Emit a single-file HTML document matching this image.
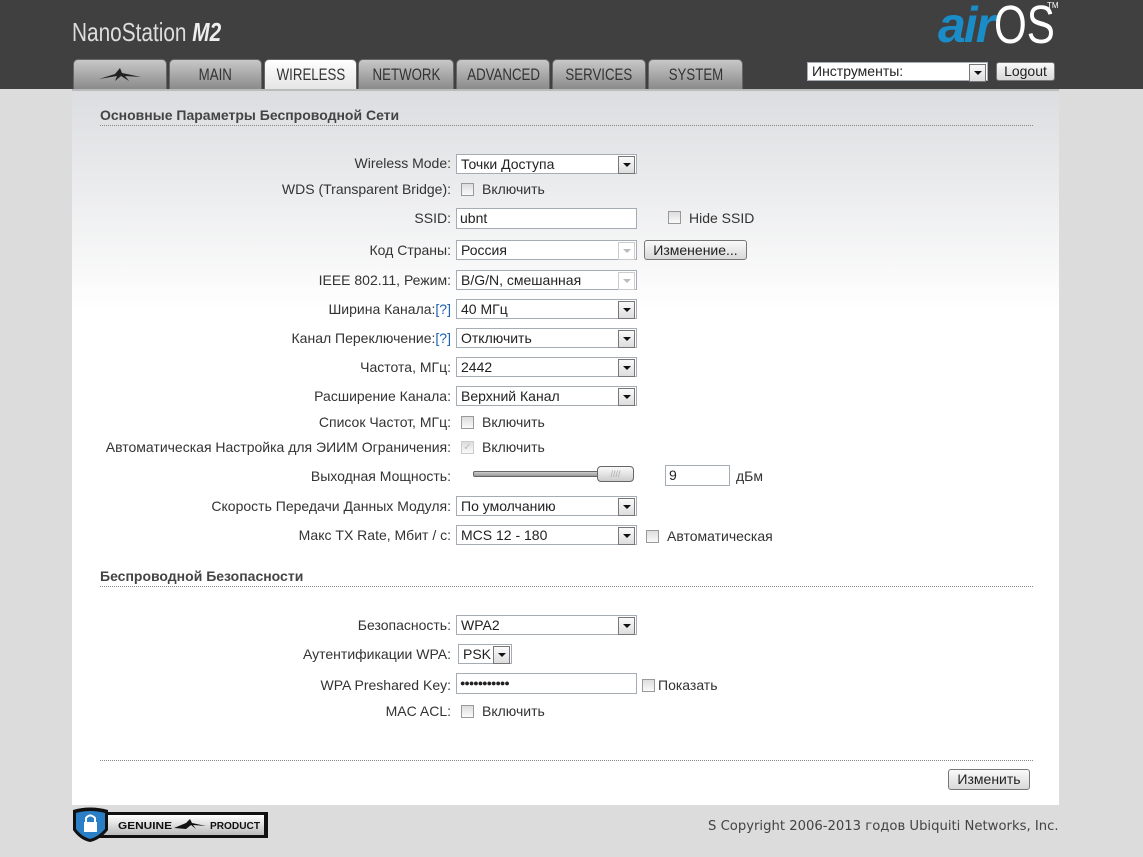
<!DOCTYPE html>
<html><head><meta charset="utf-8">
<style>
*{margin:0;padding:0;box-sizing:border-box}
body{width:1143px;height:857px;background:#dcdcdc;font-family:"Liberation Sans",Arial,sans-serif;font-size:14px;color:#333;position:relative;overflow:hidden}
.hdr{position:absolute;left:0;top:0;width:1143px;height:89px;background:#404040}
.a{position:absolute;white-space:nowrap}
.tab{position:absolute;top:59px;height:30px;border-radius:5px 5px 0 0;background:linear-gradient(#c8c8c8,#8a8a8a);border:1px solid #666;border-bottom:none;text-align:center;font-size:17px;line-height:30px;color:#333}
.tab span{display:inline-block;transform:scaleX(0.78)}
.tab.on{background:linear-gradient(#fff,#e4e4e4);height:31px}
.panel{position:absolute;left:72px;top:89px;width:987px;height:716px;background:linear-gradient(#dcdde0 0,#fff 220px);border-top:2px solid #bbb}
.lbl{position:absolute;right:692px;white-space:nowrap;color:#333}
.sel{position:absolute;height:20px;border:1px solid #a5acb5;background:#fff;padding-left:4px;line-height:18px;color:#222}
.sel:after{content:"";position:absolute;right:1px;top:1px;width:15px;height:16px;background:linear-gradient(#fafafa,#ddd);border:1px solid #777}
.sel:before{content:"";position:absolute;right:5px;top:8px;border:4px solid transparent;border-top:4px solid #111;z-index:2}
.sel.dis:after{border-color:#ccc;background:#fff}
.sel.dis:before{border-top-color:#bbb}
.inp{position:absolute;height:21px;border:1px solid #a5acb5;background:#fff;padding-left:3px;line-height:19px;color:#222}
.cb{position:absolute;width:13px;height:13px;border:1px solid #999;background:linear-gradient(#ddd,#fafafa)}
.btn{position:absolute;border:1px solid #777;border-radius:3px;background:linear-gradient(#fafafa,#d8d8d8);text-align:center;color:#222}
.h{position:absolute;left:100px;width:933px;font-weight:bold;color:#444;border-bottom:1px dotted #888;padding-bottom:2px}
.q{color:#1a5fb0}
</style></head><body>
<div class="hdr"></div>
<div class="a" style="left:72px;top:17px;font-size:26px;color:#ddd;transform:scaleX(0.8);transform-origin:left">NanoStation <i style="font-weight:bold;color:#eee">M2</i></div>
<div class="a" style="left:938px;top:-4px;font-size:50px;font-style:italic;color:#1a8cc8;font-weight:bold;letter-spacing:-2px">air</div>
<div class="a" style="left:994px;top:-6px;font-size:54px;color:#fff;transform:scaleX(0.78);transform-origin:left">OS</div>
<div class="a" style="left:1047px;top:1px;font-size:8px;color:#fff">TM</div>
<div class="sel" style="left:807px;top:62px;width:181px;height:19px;font-size:14px;line-height:17px">Инструменты:</div>
<div class="btn" style="left:996px;top:62px;width:59px;height:19px;line-height:17px">Logout</div>

<div class="tab" style="left:73px;width:94px"><svg width="50" height="20" viewBox="0 0 50 20" style="margin-top:5px"><path d="M4 14 L20 9 L25 3 L27 8 L46 12 L30 11 L34 16 L26 11 L20 16 L22 11Z" fill="#222"/></svg></div>
<div class="tab" style="left:169px;width:93px"><span>MAIN</span></div>
<div class="tab on" style="left:264px;width:93px"><span>WIRELESS</span></div>
<div class="tab" style="left:358px;width:96px"><span>NETWORK</span></div>
<div class="tab" style="left:456px;width:94px"><span>ADVANCED</span></div>
<div class="tab" style="left:552px;width:94px"><span>SERVICES</span></div>
<div class="tab" style="left:648px;width:95px"><span>SYSTEM</span></div>

<div class="panel"></div>
<div class="h" style="top:107px">Основные Параметры Беспроводной Сети</div>

<div class="lbl" style="top:155px">Wireless Mode:</div><div class="sel" style="left:456px;top:154px;width:181px">Точки Доступа</div>
<div class="lbl" style="top:181px">WDS (Transparent Bridge):</div><div class="cb" style="left:461px;top:183px"></div><div class="a" style="left:482px;top:181px">Включить</div>
<div class="lbl" style="top:210px">SSID:</div><div class="inp" style="left:456px;top:208px;width:181px">ubnt</div><div class="cb" style="left:668px;top:211px"></div><div class="a" style="left:689px;top:210px">Hide SSID</div>
<div class="lbl" style="top:242px">Код Страны:</div><div class="sel dis" style="left:456px;top:240px;width:181px">Россия</div><div class="btn" style="left:644px;top:240px;width:103px;height:20px;line-height:18px">Изменение...</div>
<div class="lbl" style="top:272px">IEEE 802.11, Режим:</div><div class="sel dis" style="left:456px;top:270px;width:181px">B/G/N, смешанная</div>
<div class="lbl" style="top:301px">Ширина Канала:<span class="q">[?]</span></div><div class="sel" style="left:456px;top:299px;width:181px">40 МГц</div>
<div class="lbl" style="top:330px">Канал Переключение:<span class="q">[?]</span></div><div class="sel" style="left:456px;top:328px;width:181px">Отключить</div>
<div class="lbl" style="top:359px">Частота, МГц:</div><div class="sel" style="left:456px;top:357px;width:181px">2442</div>
<div class="lbl" style="top:388px">Расширение Канала:</div><div class="sel" style="left:456px;top:386px;width:181px">Верхний Канал</div>
<div class="lbl" style="top:414px">Список Частот, МГц:</div><div class="cb" style="left:461px;top:416px"></div><div class="a" style="left:482px;top:414px">Включить</div>
<div class="lbl" style="top:439px">Автоматическая Настройка для ЭИИМ Ограничения:</div><div class="cb" style="left:461px;top:441px;border-color:#ccc;color:#bbb;font-size:10px;line-height:11px;text-align:center">✓</div><div class="a" style="left:482px;top:439px">Включить</div>
<div class="lbl" style="top:468px">Выходная Мощность:</div>
<div class="a" style="left:473px;top:471px;width:130px;height:6px;background:linear-gradient(#ccc,#999);border:1px solid #666;border-radius:2px"></div>
<div class="a" style="left:597px;top:466px;width:37px;height:16px;border:1px solid #666;border-radius:4px;background:linear-gradient(#fafafa,#ccc);font-size:9px;color:#aaa;text-align:center;line-height:14px">////</div>
<div class="inp" style="left:665px;top:465px;width:65px">9</div><div class="a" style="left:736px;top:468px">дБм</div>
<div class="lbl" style="top:498px">Скорость Передачи Данных Модуля:</div><div class="sel" style="left:456px;top:496px;width:181px">По умолчанию</div>
<div class="lbl" style="top:527px">Макс TX Rate, Мбит / с:</div><div class="sel" style="left:456px;top:525px;width:181px">MCS 12 - 180</div><div class="cb" style="left:646px;top:530px"></div><div class="a" style="left:667px;top:528px">Автоматическая</div>

<div class="h" style="top:568px">Беспроводной Безопасности</div>
<div class="lbl" style="top:617px">Безопасность:</div><div class="sel" style="left:456px;top:615px;width:181px">WPA2</div>
<div class="lbl" style="top:646px">Аутентификации WPA:</div><div class="sel" style="left:458px;top:644px;width:54px">PSK</div>
<div class="lbl" style="top:677px">WPA Preshared Key:</div><div class="inp" style="left:456px;top:673px;width:181px;font-size:9px;letter-spacing:-1px">●●●●●●●●●●●</div><div class="cb" style="left:642px;top:679px"></div><div class="a" style="left:658px;top:677px">Показать</div>
<div class="lbl" style="top:703px">MAC ACL:</div><div class="cb" style="left:461px;top:705px"></div><div class="a" style="left:482px;top:703px">Включить</div>

<div class="a" style="left:100px;top:760px;width:933px;border-top:1px dotted #888"></div>
<div class="btn" style="left:948px;top:769px;width:82px;height:21px;line-height:19px">Изменить</div>

<svg class="a" style="left:70px;top:806px" width="202" height="38" viewBox="0 0 202 38">
<defs><linearGradient id="g" x1="0" y1="0" x2="0" y2="1"><stop offset="0" stop-color="#fff"/><stop offset="1" stop-color="#bbb"/></linearGradient></defs>
<rect x="22" y="6" width="176" height="26" fill="#111"/>
<rect x="26" y="9" width="168" height="20" fill="url(#g)"/>
<path d="M3 4 Q20 -1 38 4 L38 24 Q30 34 20 36 Q10 34 3 24Z" fill="#111"/>
<path d="M6 7 Q20 3 35 7 L35 23 Q28 31 20 33 Q12 31 6 23Z" fill="#2a7fc6"/>
<rect x="14" y="16" width="13" height="10" fill="#fff"/><path d="M16 16 V12 Q20 7 25 12 V16" fill="none" stroke="#fff" stroke-width="2"/>
<text x="48" y="23" font-family="Liberation Sans" font-weight="bold" font-size="10" textLength="54" lengthAdjust="spacingAndGlyphs" fill="#111">GENUINE</text>
<path d="M104 22 L116 17 L120 13 L122 17 L136 20 L123 19 L126 23 L121 19 L116 23Z" fill="#111"/>
<text x="140" y="23" font-family="Liberation Sans" font-weight="bold" font-size="10" textLength="50" lengthAdjust="spacingAndGlyphs" fill="#111">PRODUCT</text>
</svg>
<div class="a" style="left:708px;top:819px;font-family:'DejaVu Sans',sans-serif;font-size:13.2px;color:#444">S Copyright 2006-2013 годов Ubiquiti Networks, Inc.</div>
</body></html>
